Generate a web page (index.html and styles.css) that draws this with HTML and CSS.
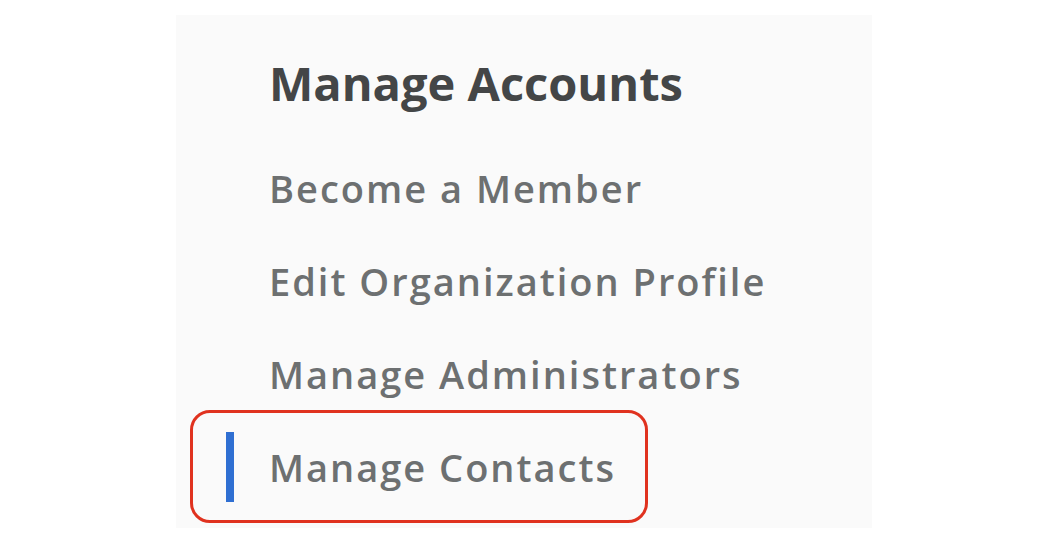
FILE: index.html
```html
<!DOCTYPE html>
<html lang="en">
<head>
<meta charset="utf-8">
<title>Manage Accounts</title>
<link rel="stylesheet" href="styles.css">
</head>
<body>
<nav class="panel">
  <h2 class="title">Manage Accounts</h2>
  <ul class="menu">
    <li class="item">Become a Member</li>
    <li class="item">Edit Organization Profile</li>
    <li class="item">Manage Administrators</li>
    <li class="item active">Manage Contacts<span class="highlight"></span></li>
  </ul>
</nav>
</body>
</html>
```
FILE: styles.css
```css
html, body {
  margin: 0;
  padding: 0;
  background: #ffffff;
}
body {
  width: 1056px;
  height: 547px;
  overflow: hidden;
  font-family: "Open Sans", "Noto Sans", sans-serif;
}
.panel {
  margin: 15px 0 0 176px;
  width: 696px;
  height: 513px;
  box-sizing: border-box;
  background: #fafafa;
  padding: 40px 0 0 93px;
}
.title {
  margin: 0 0 31px 0;
  font-size: 47px;
  line-height: 56px;
  font-weight: 700;
  color: #444647;
  letter-spacing: 0;
}
.menu {
  list-style: none;
  margin: 0;
  padding: 0;
}
.item {
  position: relative;
  height: 93px;
  font-size: 38px;
  line-height: 93px;
  font-weight: 600;
  color: #6d7071;
  letter-spacing: 2px;
}
.item.active::before {
  content: "";
  position: absolute;
  left: -43px;
  top: 11px;
  width: 8px;
  height: 70px;
  background: #2f6fd2;
}
.highlight {
  position: absolute;
  left: -79px;
  top: -11px;
  width: 458px;
  height: 113px;
  box-sizing: border-box;
  border: 3px solid #e0321f;
  border-radius: 20px;
}
```
